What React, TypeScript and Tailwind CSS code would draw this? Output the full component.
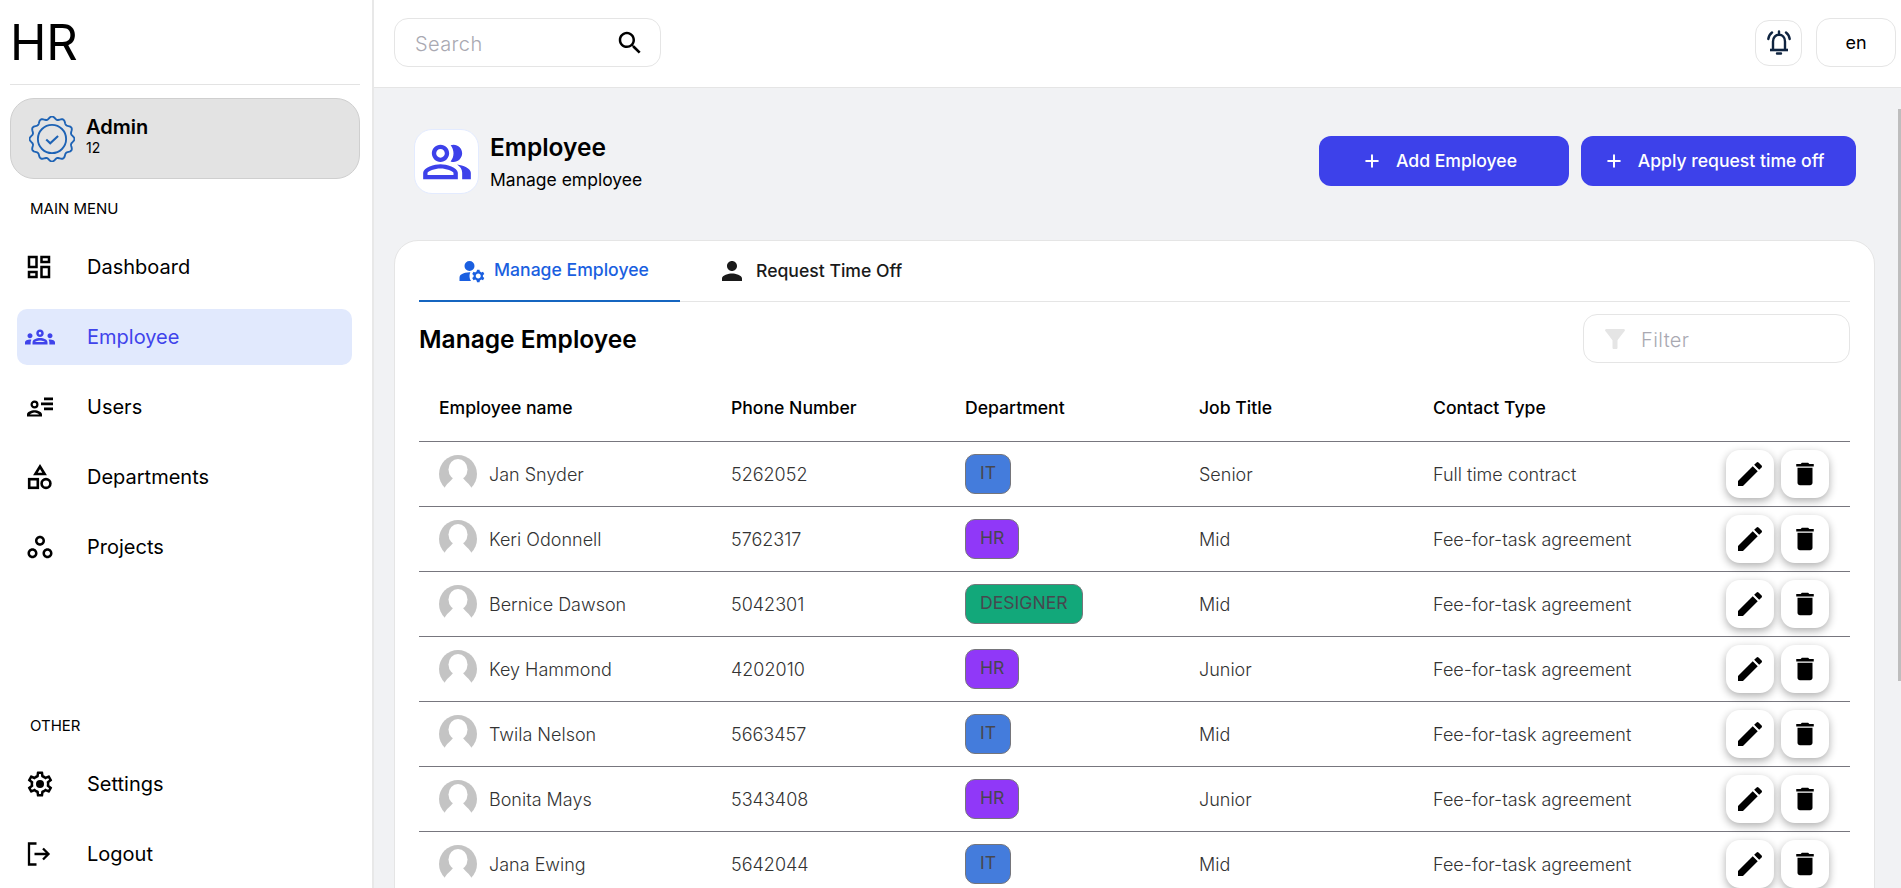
import React from "react";
import { Plus } from "lucide-react";

const employees = [
  { name: "Jan Snyder", phone: "5262052", dept: "IT", title: "Senior", contract: "Full time contract" },
  { name: "Keri Odonnell", phone: "5762317", dept: "HR", title: "Mid", contract: "Fee-for-task agreement" },
  { name: "Bernice Dawson", phone: "5042301", dept: "DESIGNER", title: "Mid", contract: "Fee-for-task agreement" },
  { name: "Key Hammond", phone: "4202010", dept: "HR", title: "Junior", contract: "Fee-for-task agreement" },
  { name: "Twila Nelson", phone: "5663457", dept: "IT", title: "Mid", contract: "Fee-for-task agreement" },
  { name: "Bonita Mays", phone: "5343408", dept: "HR", title: "Junior", contract: "Fee-for-task agreement" },
  { name: "Jana Ewing", phone: "5642044", dept: "IT", title: "Mid", contract: "Fee-for-task agreement" },
];

const deptColors: Record<string, string> = {
  IT: "bg-[#447cdc]",
  HR: "bg-[#9038f8]",
  DESIGNER: "bg-[#12a87a]",
};

const Icon = ({ d, className }: { d: string; className?: string }) => (
  <svg viewBox="0 0 24 24" fill="currentColor" className={className}>
    <path d={d} />
  </svg>
);

const DashboardIcon = () => (
  <Icon className="w-[30px] h-[30px] -ml-[3px]" d="M19 5v2h-4V5zM9 5v6H5V5zm10 8v6h-4v-6zM9 17v2H5v-2zM21 3h-8v6h8zM11 3H3v10h8zm10 8h-8v10h8zm-10 4H3v6h8z" />
);

const GroupsIcon = () => (
  <Icon
    className="w-[30px] h-[30px] -ml-[2px]"
    d="M4 13c1.1 0 2-.9 2-2s-.9-2-2-2-2 .9-2 2 .9 2 2 2m1.13 1.1c-.37-.06-.74-.1-1.13-.1-.99 0-1.93.21-2.78.58C.48 14.9 0 15.62 0 16.43V18h4.5v-1.61c0-.83.23-1.61.63-2.29M20 13c1.1 0 2-.9 2-2s-.9-2-2-2-2 .9-2 2 .9 2 2 2m4 3.43c0-.81-.48-1.53-1.22-1.85-.85-.37-1.79-.58-2.78-.58-.39 0-.76.04-1.13.1.4.68.63 1.46.63 2.29V18H24zm-7.76-2.65c-1.17-.52-2.61-.9-4.24-.9s-3.07.39-4.24.9C6.68 14.13 6 15.21 6 16.39V18h12v-1.61c0-1.18-.68-2.26-1.76-2.61M8.07 16c.09-.23.13-.39.91-.69.97-.38 1.99-.56 3.02-.56s2.05.18 3.02.56c.77.3.81.46.91.69zM12 8c.55 0 1 .45 1 1s-.45 1-1 1-1-.45-1-1 .45-1 1-1m0-2c-1.66 0-3 1.34-3 3s1.34 3 3 3 3-1.34 3-3-1.34-3-3-3"
  />
);

const UsersIcon = () => (
  <svg viewBox="0 0 26 20" fill="none" className="w-[26px] h-[20px]">
    <circle cx="7.5" cy="7.5" r="2.9" stroke="currentColor" strokeWidth="2.2" />
    <path d="M0 19.5v-2c0-2.6 4-4.2 7.5-4.2s7.5 1.6 7.5 4.2v2zM3 17.5h9c-.6-1-2.8-2-4.5-2s-3.9 1-4.5 2z" fill="currentColor" fillRule="evenodd" />
    <path d="M17 .5h9v2.8h-9zM14 5.5h12v2.8H14zM17 10.5h9v2.8h-9z" fill="currentColor" />
  </svg>
);

const DepartmentsIcon = () => (
  <svg viewBox="0 0 26 26" fill="none" stroke="currentColor" strokeWidth="2.6" className="w-[26px] h-[26px]">
    <path d="M13 2.5 17.6 10H8.4z" />
    <rect x="2.2" y="15.2" width="8.6" height="8.6" />
    <circle cx="19" cy="19.5" r="4.4" />
  </svg>
);

const ProjectsIcon = () => (
  <Icon
    className="w-[30px] h-[30px] -ml-[2px]"
    d="M6 15c1.1 0 2 .9 2 2s-.9 2-2 2-2-.9-2-2 .9-2 2-2m0-2c-2.2 0-4 1.8-4 4s1.8 4 4 4 4-1.8 4-4-1.8-4-4-4m6-8c1.1 0 2 .9 2 2s-.9 2-2 2-2-.9-2-2 .9-2 2-2m0-2C9.8 3 8 4.8 8 7s1.8 4 4 4 4-1.8 4-4-1.8-4-4-4m6 12c1.1 0 2 .9 2 2s-.9 2-2 2-2-.9-2-2 .9-2 2-2m0-2c-2.2 0-4 1.8-4 4s1.8 4 4 4 4-1.8 4-4-1.8-4-4-4"
  />
);

const SettingsIcon = () => (
  <svg viewBox="0 0 24 24" fill="currentColor" className="w-[30px] h-[30px] -ml-[2px]">
    <path d="M19.43 12.98c.04-.32.07-.64.07-.98 0-.34-.03-.66-.07-.98l2.11-1.65c.19-.15.24-.42.12-.64l-2-3.46c-.09-.16-.26-.25-.44-.25-.06 0-.12.01-.17.03l-2.49 1c-.52-.4-1.08-.73-1.69-.98l-.38-2.65C14.46 2.18 14.25 2 14 2h-4c-.25 0-.46.18-.49.42l-.38 2.65c-.61.25-1.17.59-1.69.98l-2.49-1c-.06-.02-.12-.03-.18-.03-.17 0-.34.09-.43.25l-2 3.46c-.13.22-.07.49.12.64l2.11 1.65c-.04.32-.07.65-.07.98 0 .33.03.66.07.98l-2.11 1.65c-.19.15-.24.42-.12.64l2 3.46c.09.16.26.25.44.25.06 0 .12-.01.17-.03l2.49-1c.52.4 1.08.73 1.69.98l.38 2.65c.03.24.24.42.49.42h4c.25 0 .46-.18.49-.42l.38-2.65c.61-.25 1.17-.59 1.69-.98l2.49 1c.06.02.12.03.18.03.17 0 .34-.09.43-.25l2-3.46c.12-.22.07-.49-.12-.64zm-1.98-1.71c.04.31.05.52.05.73 0 .21-.02.43-.05.73l-.14 1.13.89.7 1.08.84-.7 1.21-1.27-.51-1.04-.42-.9.68c-.43.32-.84.56-1.25.73l-1.06.43-.16 1.13-.2 1.35h-1.4l-.19-1.35-.16-1.13-1.06-.43c-.43-.18-.83-.41-1.23-.71l-.91-.7-1.06.43-1.27.51-.7-1.21 1.08-.84.89-.7-.14-1.13c-.03-.31-.05-.54-.05-.74s.02-.43.05-.73l.14-1.13-.89-.7-1.08-.84.7-1.21 1.27.51 1.04.42.9-.68c.43-.32.84-.56 1.25-.73l1.06-.43.16-1.13.2-1.35h1.39l.19 1.35.16 1.13 1.06.43c.43.18.83.41 1.23.71l.91.7 1.06-.43 1.27-.51.7 1.21-1.07.85-.89.7z" />
    <circle cx="12" cy="12" r="3.2" />
  </svg>
);

const LogoutIcon = () => (
  <svg viewBox="0 0 24 24" fill="none" stroke="currentColor" strokeWidth="2.3" className="w-[24px] h-[24px]">
    <path d="M9.5 1.5H2v21h7.5" />
    <path d="M7.5 12h14M16 6.5l5.5 5.5-5.5 5.5" />
  </svg>
);

// scalloped seal on the admin card
const SealIcon = () => {
  const points: string[] = [];
  for (let i = 0; i <= 180; i++) {
    const a = (i / 180) * Math.PI * 2;
    const r = 20.2 + 1.3 * Math.cos(a * 12);
    points.push(`${(22 + r * Math.sin(a)).toFixed(2)},${(22 - r * Math.cos(a)).toFixed(2)}`);
  }
  return (
    <svg viewBox="0 0 44 44" fill="none" stroke="#1e63b5" strokeWidth="1.8" className="w-[46px] h-[46px]">
      <polygon points={points.join(" ")} />
      <circle cx="22" cy="22" r="13.5" />
      <path d="M16.5 22.5l3.8 3.6 7.5-7" strokeWidth="2" />
    </svg>
  );
};

const Avatar = () => (
  <svg viewBox="0 0 38 38" className="w-[38px] h-[38px] shrink-0">
    <circle cx="19" cy="19" r="19" fill="#c4c4c4" />
    <ellipse cx="19" cy="14.5" rx="9.5" ry="10.5" fill="#fff" />
    <path d="M6 32c3-4.5 6-6 8-9h10c2 3 5 4.5 8 9l3 6H3z" fill="#fff" />
  </svg>
);

const navItems = [
  { label: "Dashboard", icon: <DashboardIcon /> },
  { label: "Employee", icon: <GroupsIcon />, active: true },
  { label: "Users", icon: <UsersIcon /> },
  { label: "Departments", icon: <DepartmentsIcon /> },
  { label: "Projects", icon: <ProjectsIcon /> },
];

const NavItem = ({ label, icon, active }: { label: string; icon: React.ReactNode; active?: boolean }) => (
  <div
    className={`flex items-center h-[56px] ml-[7px] mr-[8px] pl-[10px] rounded-[10px] text-[20px] ${
      active ? "bg-[#e1e9fd] text-[#3f43eb]" : "text-black"
    }`}
  >
    <span className="w-[60px] shrink-0 flex items-center">{icon}</span>
    {label}
  </div>
);

const ActionButton = ({ children }: { children: React.ReactNode }) => (
  <button className="w-[48px] h-[48px] rounded-[14px] bg-white flex items-center justify-center shadow-[0_3px_9px_rgba(0,0,0,0.32)]">
    {children}
  </button>
);

export default function App() {
  return (
    <div className="flex h-screen overflow-hidden relative bg-white text-black font-[Inter,sans-serif]">
      <aside className="w-[374px] shrink-0 h-full flex flex-col pl-[10px] pr-[12px] border-r-2 border-[#e8e8e8]">
        <div className="h-[85px] shrink-0 border-b border-[#e3e3e3] flex items-center text-[49px] leading-none -tracking-[0.2px]">HR</div>
        <div className="mt-[13px] h-[81px] shrink-0 rounded-[24px] bg-[#e3e3e3] border border-[#cfcfcf] flex items-center pl-[18px] gap-[11px]">
          <SealIcon />
          <div className="pb-[5px]">
            <div className="text-[20px] font-semibold leading-[24px]">Admin</div>
            <div className="text-[14px] leading-[18px]">12</div>
          </div>
        </div>
        <div className="mt-[20px] mb-[20px] h-[20px] pl-[20px] text-[15px] leading-[20px]">MAIN MENU</div>
        <nav className="flex flex-col gap-[14px]">
          {navItems.map((item) => (
            <NavItem key={item.label} {...item} />
          ))}
        </nav>
        <div className="mt-auto mb-[20px] h-[20px] pl-[20px] text-[15px] leading-[20px]">OTHER</div>
        <div className="flex flex-col gap-[14px] pb-[6px]">
          <NavItem label="Settings" icon={<SettingsIcon />} />
          <NavItem label="Logout" icon={<LogoutIcon />} />
        </div>
      </aside>

      <div className="flex-1 min-w-0 h-full flex flex-col">
        <header className="h-[88px] shrink-0 border-b border-[#e5e5e5] flex items-center justify-between pl-[20px] pr-[5px] pb-[2px]">
          <div className="w-[267px] h-[49px] rounded-[14px] border border-[#e5e5e5] flex items-center justify-between pl-[20px] pr-[15px]">
            <span className="text-[20px] font-light text-[#a9a9b2] tracking-[0.4px] pt-[2px]">Search</span>
            <Icon className="w-[30px] h-[30px] text-black" d="M15.5 14h-.79l-.28-.27C15.41 12.59 16 11.11 16 9.5 16 5.91 13.09 3 9.5 3S3 5.91 3 9.5 5.91 16 9.5 16c1.61 0 3.09-.59 4.23-1.57l.27.28v.79l5 4.99L20.49 19zm-6 0C7.01 14 5 11.99 5 9.5S7.01 5 9.5 5 14 7.01 14 9.5 11.99 14 9.5 14" />
          </div>
          <div className="flex items-center gap-[14px]">
            <div className="w-[47px] h-[46px] rounded-[14px] border border-[#e5e5e5] flex items-center justify-center text-[#0f2440]">
              <svg viewBox="0 0 28 28" fill="none" stroke="currentColor" strokeWidth="2.4" className="w-[28px] h-[28px]">
                <path d="M8 20V12.5c0-4 2.6-6.7 6-6.7s6 2.7 6 6.7V20" />
                <path d="M5 21h18" strokeWidth="2.6" />
                <path d="M12 24.5h4M14 2.5v2" strokeLinecap="round" />
                <path d="M7 3.5C4.8 5.2 3.6 7.5 3.3 10M21 3.5c2.2 1.7 3.4 4 3.7 6.5" strokeLinecap="round" />
              </svg>
            </div>
            <div className="w-[80px] h-[49px] rounded-[14px] border border-[#e5e5e5] flex items-center justify-center text-[18px]">en</div>
          </div>
        </header>

        <main className="flex-1 min-h-0 overflow-hidden bg-[#f1f2f4] pl-[20px] pr-[26px] pt-[41px]">
          <div className="flex items-center justify-between ml-[20px] mr-[19px] h-[65px] mb-[46px]">
            <div className="flex items-center gap-[11px]">
              <div className="w-[65px] h-[65px] rounded-[18px] bg-white border border-[#e3ebff] flex items-center justify-center text-[#3d41ea]">
                <Icon className="w-[52px] h-[52px]" d="M16.67 13.13C18.04 14.06 19 15.32 19 17v3h4v-3c0-2.18-3.57-3.47-6.33-3.87M15 12c2.21 0 4-1.79 4-4s-1.79-4-4-4c-.47 0-.91.1-1.33.24C14.5 5.27 15 6.58 15 8s-.5 2.73-1.33 3.76c.42.14.86.24 1.33.24M9 12c2.21 0 4-1.79 4-4s-1.79-4-4-4-4 1.79-4 4 1.79 4 4 4m0-6c1.1 0 2 .9 2 2s-.9 2-2 2-2-.9-2-2 .9-2 2-2M9 13c-2.67 0-8 1.34-8 4v3h16v-3c0-2.66-5.33-4-8-4m6 5H3v-.99C3.2 16.29 6.3 15 9 15s5.8 1.29 6 2Z" />
              </div>
              <div>
                <div className="text-[24.5px] font-semibold leading-[32px]">Employee</div>
                <div className="text-[17.5px] leading-[24px] mt-[5px]">Manage employee</div>
              </div>
            </div>
            <div className="flex gap-[12px] -mt-[1px]">
              <button className="w-[250px] h-[50px] rounded-[12px] bg-[#3d41ea] text-white text-[17.6px] font-medium flex items-center justify-center gap-[14px] pr-[9px]">
                <Plus className="w-[20px] h-[20px]" strokeWidth={2.4} />
                Add Employee
              </button>
              <button className="w-[275px] h-[50px] rounded-[12px] bg-[#3d41ea] text-white text-[17.6px] font-medium flex items-center justify-center gap-[14px] pr-[9px]">
                <Plus className="w-[20px] h-[20px]" strokeWidth={2.4} />
                Apply request time off
              </button>
            </div>
          </div>

          <section className="bg-white rounded-t-[24px] border border-[#e5e5e5] px-[24px] h-[700px]">
            <div className="flex h-[61px] border-b border-[#e5e5e5]">
              <div className="w-[261px] flex items-center pl-[38px] gap-[7px] border-b-2 border-[#1565c0] -mb-px text-[#1a5fe0] text-[17.6px] font-medium">
                <Icon className="w-[30px] h-[30px]" d="M10.67 13.02c-.22-.01-.44-.02-.67-.02-2.42 0-4.68.67-6.61 1.82-.88.52-1.39 1.5-1.39 2.53V20h9.26c-.79-1.13-1.26-2.51-1.26-4 0-1.07.25-2.07.67-2.98M10 12a4 4 0 1 0 0-8 4 4 0 0 0 0 8m10.75 4c0-.22-.03-.42-.06-.63l1.14-1.01-1-1.73-1.45.49c-.32-.27-.68-.48-1.08-.63L18 11h-2l-.3 1.49c-.4.15-.76.36-1.08.63l-1.45-.49-1 1.73 1.14 1.01c-.03.21-.06.41-.06.63s.03.42.06.63l-1.14 1.01 1 1.73 1.45-.49c.32.27.68.48 1.08.63L16 21h2l.3-1.49c.4-.15.76-.36 1.08-.63l1.45.49 1-1.73-1.14-1.01c.03-.21.06-.41.06-.63M17 18c-1.1 0-2-.9-2-2s.9-2 2-2 2 .9 2 2-.9 2-2 2" />
                Manage Employee
              </div>
              <div className="flex items-center pl-[37px] gap-[9px] text-[#1a1a1a] text-[17.6px] font-medium">
                <Icon className="w-[30px] h-[30px]" d="M12 12c2.21 0 4-1.79 4-4s-1.79-4-4-4-4 1.79-4 4 1.79 4 4 4m0 2c-2.67 0-8 1.34-8 4v2h16v-2c0-2.66-5.33-4-8-4" />
                Request Time Off
              </div>
            </div>

            <div className="flex items-center justify-between h-[74px] pb-[1px]">
              <h2 className="text-[24.5px] font-semibold pt-[2px]">Manage Employee</h2>
              <div className="w-[267px] h-[49px] rounded-[14px] border border-[#e5e5e5] flex items-center pl-[16px] gap-[11px]">
                <Icon className="w-[30px] h-[30px] text-[#e5e5e5]" d="M4.25 5.61C6.27 8.2 10 13 10 13v6c0 .55.45 1 1 1h2c.55 0 1-.45 1-1v-6s3.72-4.8 5.74-7.39c.51-.66.04-1.61-.79-1.61H5.04c-.83 0-1.3.95-.79 1.61" />
                <span className="text-[20px] font-light text-[#a9a9b2] tracking-[0.4px] pt-[2px]">Filter</span>
              </div>
            </div>

            <table className="w-full table-fixed border-collapse">
              <colgroup>
                <col className="w-[292px]" />
                <col className="w-[234px]" />
                <col className="w-[234px]" />
                <col className="w-[234px]" />
                <col />
              </colgroup>
              <thead>
                <tr className="h-[65px] border-b border-[#77767e]">
                  {["Employee name", "Phone Number", "Department", "Job Title", "Contact Type"].map((h) => (
                    <th key={h} className="pl-[20px] text-left text-[17.6px] font-medium">
                      {h}
                    </th>
                  ))}
                </tr>
              </thead>
              <tbody>
                {employees.map((e) => (
                  <tr key={e.name} className="h-[65px] border-b border-[#77767e] text-[18px] font-light text-[#333]">
                    <td className="pl-[20px]">
                      <div className="flex items-center gap-[12px]">
                        <Avatar />
                        <span className="pt-px">{e.name}</span>
                      </div>
                    </td>
                    <td className="pl-[20px] pt-px">{e.phone}</td>
                    <td className="pl-[20px]">
                      <span className={`inline-flex items-center h-[40px] px-[14px] rounded-[10px] border border-[#75757a] text-[17.6px] font-normal text-[#47474f] ${deptColors[e.dept]}`}>
                        {e.dept}
                      </span>
                    </td>
                    <td className="pl-[20px] pt-px">{e.title}</td>
                    <td className="pl-[20px]">
                      <div className="flex items-center justify-between pr-[21px]">
                        <span className="pt-px">{e.contract}</span>
                        <div className="flex gap-[7px] text-black">
                          <ActionButton>
                            <Icon className="w-[32px] h-[32px]" d="M3 17.25V21h3.75L17.81 9.94l-3.75-3.75zM20.71 7.04c.39-.39.39-1.02 0-1.41l-2.34-2.34a.996.996 0 0 0-1.41 0l-1.83 1.83 3.75 3.75z" />
                          </ActionButton>
                          <ActionButton>
                            <Icon className="w-[30px] h-[30px]" d="M6 19c0 1.1.9 2 2 2h8c1.1 0 2-.9 2-2V7H6zM19 4h-3.5l-1-1h-5l-1 1H5v2h14z" />
                          </ActionButton>
                        </div>
                      </div>
                    </td>
                  </tr>
                ))}
              </tbody>
            </table>
          </section>
        </main>
      </div>

      {/* page scrollbar thumb */}
      <div className="absolute right-0 top-[109px] w-[3px] h-[572px] bg-[#bdbdbd]" />
    </div>
  );
}
